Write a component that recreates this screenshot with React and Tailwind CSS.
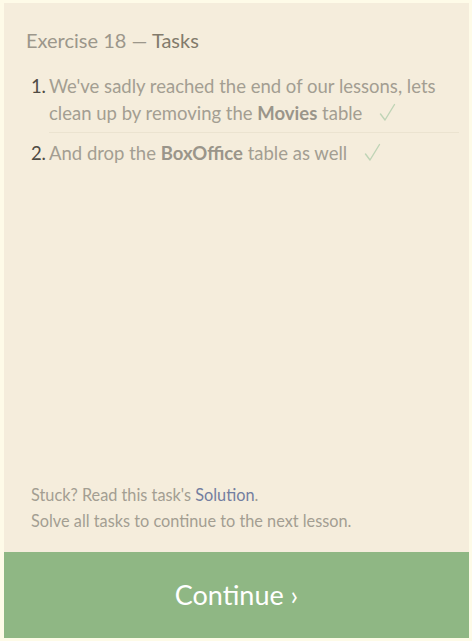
function Check() {
  return (
    <svg width="17" height="19" viewBox="0 0 17 19" className="inline-block ml-[17px] align-[-2px]">
      <polyline points="1.5,11 6,17 15.5,1.5" fill="none" stroke="#bfd4b6" strokeWidth="1.4" strokeLinecap="round" strokeLinejoin="round" />
    </svg>
  );
}

export default function App() {
  const font = { fontFamily: '"Lato", "Open Sans", sans-serif' };
  return (
    <div className="w-[472px] h-[641px] bg-[#fefbe8] pt-[3px] pb-[3px] pl-[4px] pr-[3px]" style={font}>
      <div className="h-full bg-[#f5eddc] flex flex-col">
        <div className="pl-[22px] pr-[10px] pt-[24px]">
          <h1 className="text-[20px] leading-[26px] text-[#9c978b]">
            Exercise 18 — <span className="text-[#827b6c]">Tasks</span>
          </h1>
          <ol className="mt-[20px]">
            <li className="flex">
              <span className="w-[23px] text-right pr-[3px] text-[18.5px] leading-[27px] text-[#4f4b44]">1.</span>
              <div className="flex-1 border-b border-[#ebe3d0] pb-[5px] text-[18.5px] leading-[27px] text-[#a39e92]">
                We've sadly reached the end of our lessons, lets clean up by removing the{" "}
                <b className="font-bold text-[#9a958a]">Movies</b> table
                <Check />
              </div>
            </li>
            <li className="flex mt-[7px]">
              <span className="w-[23px] text-right pr-[3px] text-[18.5px] leading-[27px] text-[#4f4b44]">2.</span>
              <div className="flex-1 text-[18.5px] leading-[27px] text-[#a39e92]">
                And drop the <b className="font-bold text-[#9a958a]">BoxOffice</b> table as well
                <Check />
              </div>
            </li>
          </ol>
        </div>
        <div className="mt-auto px-[27px] pb-[18px] text-[16.3px] leading-[26px] text-[#a39e92]">
          <p>
            Stuck? Read this task's <span className="text-[#737ea0]">Solution</span>.
          </p>
          <p>Solve all tasks to continue to the next lesson.</p>
        </div>
        <button className="h-[86px] w-full bg-[#8fb784] text-white text-[27px] flex items-center justify-center">
          Continue ›
        </button>
      </div>
    </div>
  );
}
